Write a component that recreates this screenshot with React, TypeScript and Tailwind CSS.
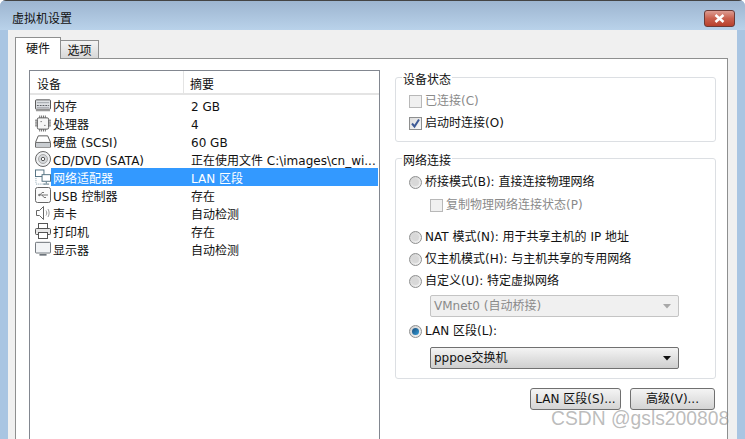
import React from 'react';

const font = { fontFamily: '"DejaVu Sans", "Noto Sans CJK SC", sans-serif' };

function MemoryIcon() {
  return (
    <svg width="17" height="13" viewBox="0 0 17 13" fill="none">
      <rect x="0.5" y="0.5" width="16" height="10" rx="1" fill="#dfe2e5" stroke="#4d4d4d" />
      <path d="M2 3.5h13" stroke="#9ba0a5" />
      <path d="M2 6.500h13" stroke="#55595e" strokeDasharray="2 1" />
      <path d="M2 8.500h13" stroke="#a5a9ae" />
      <path d="M1 11.500h15" stroke="#999" strokeWidth="2" />
    </svg>
  );
}

function CpuIcon() {
  return (
    <svg width="17" height="17" viewBox="0 0 17 17" fill="none">
      <path d="M0 5h3M0 7h3M0 9h3M0 11h3M14 5h3M14 7h3M14 9h3M14 11h3M5 0v3M7 0v3M9 0v3M11 0v3M5 14v3M7 14v3M9 14v3M11 14v3" stroke="#666" />
      <rect x="2.500" y="2.500" width="12" height="12" rx="1.500" fill="#f6f6f6" stroke="#555" />
      <rect x="6" y="6" width="1" height="1" fill="#333" />
      <rect x="10" y="10" width="1" height="1" fill="#333" />
    </svg>
  );
}

function DiskIcon() {
  return (
    <svg width="17" height="13" viewBox="0 0 17 13" fill="none">
      <path d="M3.500 0.500h10l3 7v5h-16v-5z" fill="#fff" stroke="#555" />
      <path d="M1 7.500h15" stroke="#555" />
      <rect x="1" y="8" width="15" height="4" fill="#c9cdd1" />
    </svg>
  );
}

function CdIcon() {
  return (
    <svg width="16" height="16" viewBox="0 0 16 16" fill="none">
      <circle cx="8" cy="8" r="7.5" fill="#eef0f2" stroke="#666" />
      <circle cx="8" cy="8" r="4.500" fill="#d4d7da" stroke="#aaa" />
      <circle cx="8" cy="8" r="1.700" fill="#fff" stroke="#555" />
    </svg>
  );
}

function NetworkIcon() {
  return (
    <svg width="17" height="17" viewBox="0 0 17 17" fill="none">
      <path d="M1 15.500h10M1 9v6" stroke="#7f9aa8" strokeDasharray="1 1" />
      <rect x="0.500" y="0.500" width="9" height="7" fill="#fff" stroke="#4f6e7e" />
      <rect x="7.500" y="5.500" width="9" height="7" fill="#fff" stroke="#4f6e7e" />
      <path d="M12 13v2M9 15.500h6" stroke="#4f6e7e" />
    </svg>
  );
}

function UsbIcon() {
  return (
    <svg width="16" height="16" viewBox="0 0 16 16" fill="none">
      <rect x="0.500" y="0.500" width="15" height="15" rx="2" fill="#fafafa" stroke="#666" />
      <path d="M3 8h10M5 8l2-2.500h2M7 8l2 2.500h2" stroke="#777" />
      <path d="M3 8l2-1.500v3z" fill="#777" />
    </svg>
  );
}

function SpeakerIcon() {
  return (
    <svg width="16" height="16" viewBox="0 0 16 16" fill="none">
      <path d="M1.500 5.500h3l4-4v13l-4-4h-3z" fill="#fff" stroke="#666" />
      <path d="M11 5.500c1 1.500 1 3.500 0 5M13 4c1.500 2.500 1.500 5.500 0 8" stroke="#999" />
    </svg>
  );
}

function PrinterIcon() {
  return (
    <svg width="16" height="16" viewBox="0 0 16 16" fill="none">
      <rect x="3.500" y="0.500" width="9" height="5" fill="#fff" stroke="#555" />
      <rect x="0.500" y="5.500" width="15" height="6" rx="1" fill="#e8e8e8" stroke="#555" />
      <rect x="3.500" y="9.500" width="9" height="6" fill="#fff" stroke="#555" />
    </svg>
  );
}

function MonitorIcon() {
  return (
    <svg width="18" height="16" viewBox="0 0 18 16" fill="none">
      <rect x="0.500" y="0.500" width="17" height="12" rx="1" fill="#f2f4f6" stroke="#5b6269" />
      <path d="M5 14.500h8" stroke="#6d747b" strokeWidth="2" />
      <path d="M2 12h14" stroke="#b5babf" />
    </svg>
  );
}

const devices = [
  { name: '内存', summary: '2 GB', icon: <MemoryIcon /> },
  { name: '处理器', summary: '4', icon: <CpuIcon /> },
  { name: '硬盘 (SCSI)', summary: '60 GB', icon: <DiskIcon /> },
  { name: 'CD/DVD (SATA)', summary: '正在使用文件 C:\\images\\cn_wi...', icon: <CdIcon /> },
  { name: '网络适配器', summary: 'LAN 区段', icon: <NetworkIcon />, selected: true },
  { name: 'USB 控制器', summary: '存在', icon: <UsbIcon /> },
  { name: '声卡', summary: '自动检测', icon: <SpeakerIcon /> },
  { name: '打印机', summary: '存在', icon: <PrinterIcon /> },
  { name: '显示器', summary: '自动检测', icon: <MonitorIcon /> },
];

function Checkbox({ checked, disabled }: { checked?: boolean; disabled?: boolean }) {
  return (
    <span
      className={`flex h-[13px] w-[13px] shrink-0 items-center justify-center border ${
        disabled ? 'border-[#b8b8b8] bg-[#f0f0f0]' : 'border-[#8e8f8f] bg-gradient-to-br from-[#dcdcdc] to-[#fafafa]'
      }`}
    >
      {checked && (
        <svg width="11" height="11" viewBox="0 0 11 11" fill="none">
          <path d="M2 5.500l2.500 3L9 1.500" stroke="#3d5a96" strokeWidth="2" />
        </svg>
      )}
    </span>
  );
}

function Radio({ checked }: { checked?: boolean }) {
  return (
    <span className="flex h-[13px] w-[13px] shrink-0 items-center justify-center rounded-full border border-[#8e8f8f] bg-gradient-to-br from-[#cfcfcf] to-[#f6f6f6]">
      {checked ? (
        <span className="h-[7px] w-[7px] rounded-full bg-gradient-to-br from-[#1d4f7c] to-[#2f9ad6]" />
      ) : (
        <span className="h-[7px] w-[7px] rounded-full bg-[#d8d8d8]" />
      )}
    </span>
  );
}

function Caret({ color }: { color: string }) {
  return (
    <svg width="8" height="5" viewBox="0 0 8 5">
      <path d="M0 0h8L4 4.500z" fill={color} />
    </svg>
  );
}

function RadioRow({ label, checked, className }: { label: string; checked?: boolean; className?: string }) {
  return (
    <div className={`flex h-[18px] items-center gap-[3px] pl-[13px] ${className ?? ''}`}>
      <Radio checked={checked} />
      <span className="whitespace-nowrap">{label}</span>
    </div>
  );
}

export default function App() {
  return (
    <div style={font} className="relative flex h-[439px] w-[745px] flex-col overflow-hidden rounded-t-md bg-[#a9c5e2] text-[12px] text-[#111]">
      <div className="flex h-[30px] shrink-0 items-center justify-between border-t border-[#444] bg-gradient-to-b from-[#9db5d0] to-[#b9d2ea] pl-3 pr-[10px] pt-[6px]">
        <span className="text-[12px]">虚拟机设置</span>
        <span className="flex h-[17px] w-[31px] items-center justify-center rounded-[3px] border border-[#6b3a36] bg-gradient-to-b from-[#dc9c92] via-[#c9604e] to-[#b8402c]">
          <svg width="11" height="9" viewBox="0 0 11 9">
            <path d="M1.500 1l8 7M9.500 1l-8 7" stroke="#fff" strokeWidth="2.500" />
          </svg>
        </span>
      </div>

      <div className="mx-2 flex min-h-0 flex-1 flex-col bg-[#f0f0f0] pl-[7px] pr-[9px] pt-[7px]">
        <div className="flex h-[21px] shrink-0 items-end">
          <div className="z-10 -mb-px flex h-[22px] w-[46px] items-center justify-center border border-b-0 border-[#8e8f8f] bg-white">硬件</div>
          <div className="flex h-[18px] w-[38px] items-center justify-center border border-b-0 border-l-0 border-[#8e8f8f] bg-gradient-to-b from-[#f4f4f4] to-[#d8d8d8] pt-[2px]">选项</div>
        </div>

        <div className="flex min-h-0 flex-1 gap-[15px] border border-b-0 border-[#8e8f8f] bg-white pl-[13px] pt-[11px]">
          <div className="w-[351px] shrink-0 border border-b-0 border-[#828790]">
            <div className="flex h-[24px] items-stretch border-b-2 border-[#e4e4e4] pl-[7px]">
              <span className="w-[147px] border-r border-[#e4e4e4] pt-[5px]">设备</span>
              <span className="pl-[6px] pt-[5px]">摘要</span>
            </div>
            <div className="pr-px pt-[1px]">
              {devices.map((d) => (
                <div key={d.name} className="flex h-[18px] items-center pl-[5px]">
                  <span className="flex w-[16px] shrink-0 items-center justify-center">{d.icon}</span>
                  <div className={`flex h-[18px] flex-1 items-center pl-[2px] pt-[3px] ${d.selected ? 'bg-[#3399ff] text-white' : ''}`}>
                    <span className="w-[138px] shrink-0 whitespace-nowrap">{d.name}</span>
                    <span className="whitespace-nowrap">{d.summary}</span>
                  </div>
                </div>
              ))}
            </div>
          </div>

          <div className="w-[321px] shrink-0 pt-[7px]">
            <div className="relative h-[65px] rounded-[3px] border border-[#dcdfe3] pt-[14px]">
              <span className="absolute -top-[7px] left-[6px] bg-white px-px">设备状态</span>
              <div className="flex h-[18px] items-center gap-[3px] pl-[13px] text-[#8a8a8a]">
                <Checkbox disabled />
                <span>已连接(C)</span>
              </div>
              <div className="mt-1 flex h-[18px] items-center gap-[3px] pl-[13px]">
                <Checkbox checked />
                <span>启动时连接(O)</span>
              </div>
            </div>

            <div className="relative mt-[16px] h-[221px] rounded-[3px] border border-[#dcdfe3] pt-[14px]">
              <span className="absolute -top-[7px] left-[6px] bg-white px-px">网络连接</span>
              <RadioRow label="桥接模式(B): 直接连接物理网络" />
              <div className="mt-[5px] flex h-[18px] items-center gap-[3px] pl-[34px] text-[#8a8a8a]">
                <Checkbox disabled />
                <span>复制物理网络连接状态(P)</span>
              </div>
              <RadioRow label="NAT 模式(N): 用于共享主机的 IP 地址" className="mt-[14px]" />
              <RadioRow label="仅主机模式(H): 与主机共享的专用网络" className="mt-1" />
              <RadioRow label="自定义(U): 特定虚拟网络" className="mt-1" />
              <div className="ml-[34px] mt-[5px] flex h-[22px] w-[249px] items-center justify-between rounded-[2px] border border-[#c4c4c4] bg-[#f0f0f0] pl-[3px] pr-[7px] text-[#8a8a8a]">
                <span>VMnet0 (自动桥接)</span>
                <Caret color="#a8a8a8" />
              </div>
              <RadioRow label="LAN 区段(L):" checked className="mt-[5px]" />
              <div className="ml-[34px] mt-[7px] flex h-[22px] w-[249px] items-center justify-between rounded-[2px] border border-[#707070] bg-gradient-to-b from-[#f4f4f4] to-[#cfcfcf] pl-[3px] pr-[7px]">
                <span>pppoe交换机</span>
                <Caret color="#111" />
              </div>
            </div>

            <div className="mt-[9px] flex justify-end gap-[9px] pr-px">
              <button className="h-[22px] w-[91px] rounded-[3px] border border-[#707070] bg-gradient-to-b from-[#f4f4f4] to-[#d4d4d4]">LAN 区段(S)...</button>
              <button className="h-[22px] w-[85px] rounded-[3px] border border-[#707070] bg-gradient-to-b from-[#f4f4f4] to-[#d4d4d4]">高级(V)...</button>
            </div>
          </div>
        </div>
      </div>

      <span
        style={{ fontFamily: '"Liberation Sans", sans-serif' }}
        className="absolute left-[551px] top-[405px] whitespace-nowrap text-[19.3px] text-[#8f8f8f]/60"
      >
        CSDN @gsls200808
      </span>
    </div>
  );
}
